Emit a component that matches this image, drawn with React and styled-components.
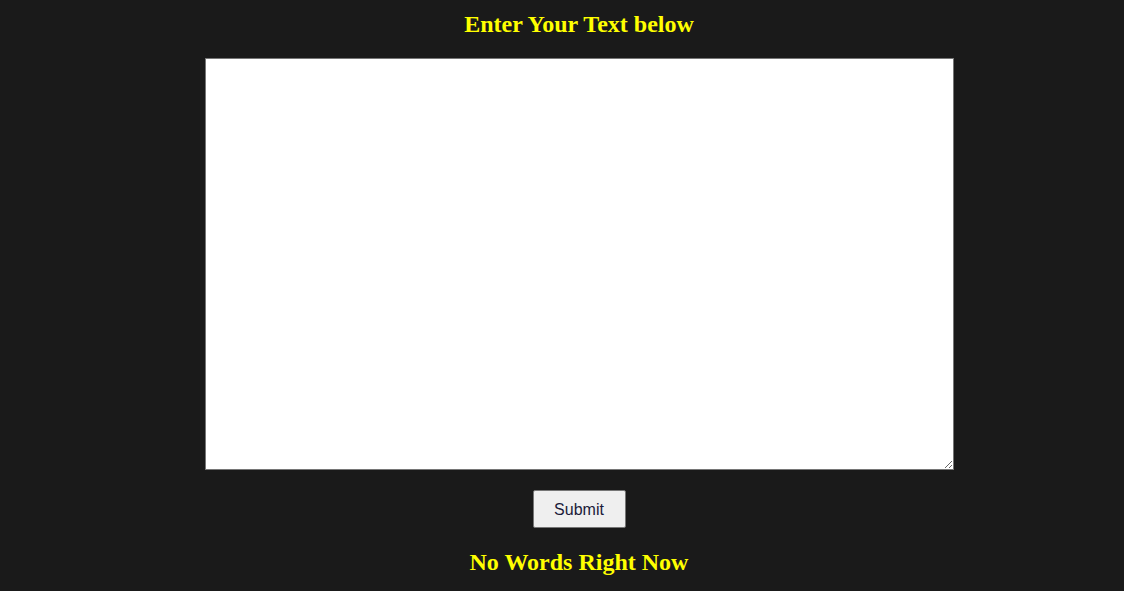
import React from 'react';
import styled, { createGlobalStyle } from 'styled-components';

const GlobalStyle = createGlobalStyle`
    html, body {
        margin: 0;
        padding: 0;
        background: #1a1a1a;
    }
`;

const Root = styled.div`
    display: flex;
    flex-direction: column;
    align-items: center;
    padding: 10px 0 0 34px;
    min-height: 591px;
    box-sizing: border-box;
`;

const Heading = styled.h2`
    margin: 0;
    font-family: "Liberation Serif", "Times New Roman", serif;
    font-size: 24px;
    font-weight: 700;
    line-height: 28px;
    color: #ffff00;
    text-align: center;
`;

const TextArea = styled.textarea`
    display: block;
    box-sizing: border-box;
    width: 749px;
    height: 412px;
    margin-top: 20px;
    padding: 2px;
    border: 1px solid #767676;
    border-radius: 0;
    background: #fff;
    font-family: "Liberation Mono", monospace;
    font-size: 13px;
    outline: none;
`;

const SubmitButton = styled.button`
    box-sizing: border-box;
    width: 93px;
    height: 38px;
    margin-top: 20px;
    margin-bottom: 20px;
    padding: 2px 0 0;
    background: #efefef;
    border: 1px solid #767676;
    border-radius: 2px;
    color: #1b1b3a;
    font-family: "Liberation Sans", Arial, sans-serif;
    font-size: 16px;
    cursor: pointer;
`;

export default function App() {
    return (
        <>
            <GlobalStyle />
            <Root>
                <Heading>Enter Your Text below</Heading>
                <TextArea />
                <SubmitButton>Submit</SubmitButton>
                <Heading>No Words Right Now</Heading>
            </Root>
        </>
    );
}
